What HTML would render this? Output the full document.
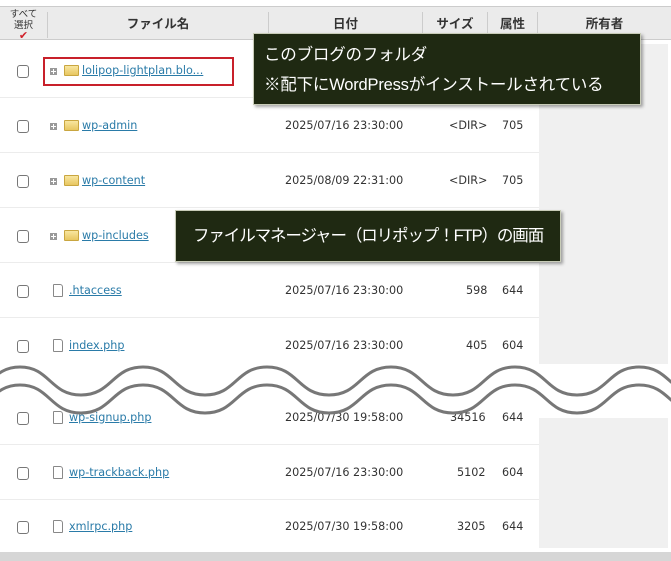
<!DOCTYPE html><html><head><meta charset="utf-8"><style>
*{margin:0;padding:0;box-sizing:border-box}
body{width:671px;height:561px;background:#fff;position:relative;overflow:hidden;font-family:"DejaVu Sans","Liberation Sans","Noto Sans CJK JP",sans-serif;font-size:11.2px;color:#333}
.a{position:absolute;white-space:nowrap}
.hd{left:0;top:6px;width:671px;height:34px;background:#ebebeb;border-top:1px solid #ccc;border-bottom:1px solid #ccc}
.hs{position:absolute;top:5px;width:1px;height:26px;background:#ccc}
.ht{position:absolute;top:0;line-height:34px;font-weight:bold;font-size:12.5px;color:#333;text-align:center;font-family:"Liberation Sans","Noto Sans CJK JP",sans-serif}
.own{left:539px;width:129px;background:#f0f0f0}
.line{left:0;width:539px;height:1px;background:#ececec}
.cb{width:12px;height:13px;border:1px solid #777;border-radius:3px;background:#fff}
.pl{width:7px;height:7px;background:#999;}
.pl:before{content:"";position:absolute;left:1px;top:3px;width:5px;height:1px;background:#fff}
.pl:after{content:"";position:absolute;left:3px;top:1px;width:1px;height:5px;background:#fff}
.fd{width:15px;height:11px;background:linear-gradient(#f8e6a0,#e8c660);border:1px solid #c9a640;border-radius:1px}
.fl{width:10px;height:13px;border:1px solid #888;border-radius:1px 3px 1px 1px;background:#fff}
.ln{color:#2a7ba8;text-decoration:underline}
.tip{background:#1f2912;color:#fff;border:1px solid #c8ccb8;box-shadow:2px 2px 3px rgba(0,0,0,.35);font-family:"Liberation Sans","Noto Sans CJK JP",sans-serif;font-size:16.5px;white-space:nowrap;overflow:hidden}
</style></head><body>
<div class="a hd">
<div class="hs" style="left:47px"></div><div class="hs" style="left:268px"></div><div class="hs" style="left:422px"></div><div class="hs" style="left:487px"></div><div class="hs" style="left:537px"></div>
<div class="ht" style="left:0;width:47px;font-size:9.5px;line-height:11px;top:2px;font-weight:normal">すべて<br>選択<br><span style="color:#d0202a;font-size:11px">✔</span></div>
<div class="ht" style="left:48px;width:220px">ファイル名</div>
<div class="ht" style="left:269px;width:153px">日付</div>
<div class="ht" style="left:423px;width:64px">サイズ</div>
<div class="ht" style="left:488px;width:49px">属性</div>
<div class="ht" style="left:538px;width:133px">所有者</div>
</div>
<div class="a own" style="top:44px;height:320px"></div>
<div class="a own" style="top:418px;height:130px"></div>
<div class="a line" style="top:97px"></div><div class="a line" style="top:152px"></div><div class="a line" style="top:207px"></div><div class="a line" style="top:262px"></div><div class="a line" style="top:317px"></div><div class="a line" style="top:444px"></div><div class="a line" style="top:499px"></div>

<div class="a cb" style="left:17px;top:65px"></div><div class="a pl" style="left:50px;top:68px"></div><div class="a fd" style="left:64px;top:65px"></div><div class="a ln" style="left:82px;top:64px">lolipop-lightplan.blo...</div>
<div class="a" style="left:43px;top:57px;width:191px;height:29px;border:2px solid #c8202a"></div>

<div class="a cb" style="left:17px;top:120px"></div><div class="a pl" style="left:50px;top:123px"></div><div class="a fd" style="left:64px;top:120px"></div><div class="a ln" style="left:82px;top:119px">wp-admin</div>
<div class="a" style="left:285px;top:119px">2025/07/16 23:30:00</div><div class="a" style="left:449px;top:119px">&lt;DIR&gt;</div><div class="a" style="left:502px;top:119px">705</div>

<div class="a cb" style="left:17px;top:175px"></div><div class="a pl" style="left:50px;top:178px"></div><div class="a fd" style="left:64px;top:175px"></div><div class="a ln" style="left:82px;top:174px">wp-content</div>
<div class="a" style="left:285px;top:174px">2025/08/09 22:31:00</div><div class="a" style="left:449px;top:174px">&lt;DIR&gt;</div><div class="a" style="left:502px;top:174px">705</div>

<div class="a cb" style="left:17px;top:230px"></div><div class="a pl" style="left:50px;top:233px"></div><div class="a fd" style="left:64px;top:230px"></div><div class="a ln" style="left:82px;top:229px">wp-includes</div>

<div class="a cb" style="left:17px;top:285px"></div><div class="a fl" style="left:53px;top:284px"></div><div class="a ln" style="left:69px;top:284px">.htaccess</div>
<div class="a" style="left:285px;top:284px">2025/07/16 23:30:00</div><div class="a" style="left:466px;top:284px">598</div><div class="a" style="left:502px;top:284px">644</div>

<div class="a cb" style="left:17px;top:340px"></div><div class="a fl" style="left:53px;top:339px"></div><div class="a ln" style="left:69px;top:339px">index.php</div>
<div class="a" style="left:285px;top:339px">2025/07/16 23:30:00</div><div class="a" style="left:466px;top:339px">405</div><div class="a" style="left:502px;top:339px">604</div>

<div class="a cb" style="left:17px;top:412px"></div><div class="a fl" style="left:53px;top:411px"></div><div class="a ln" style="left:69px;top:411px">wp-signup.php</div>
<div class="a" style="left:285px;top:411px">2025/07/30 19:58:00</div><div class="a" style="left:450px;top:411px">34516</div><div class="a" style="left:502px;top:411px">644</div>

<div class="a cb" style="left:17px;top:467px"></div><div class="a fl" style="left:53px;top:466px"></div><div class="a ln" style="left:69px;top:466px">wp-trackback.php</div>
<div class="a" style="left:285px;top:466px">2025/07/16 23:30:00</div><div class="a" style="left:457px;top:466px">5102</div><div class="a" style="left:502px;top:466px">604</div>

<div class="a cb" style="left:17px;top:521px"></div><div class="a fl" style="left:53px;top:520px"></div><div class="a ln" style="left:69px;top:520px">xmlrpc.php</div>
<div class="a" style="left:285px;top:520px">2025/07/30 19:58:00</div><div class="a" style="left:457px;top:520px">3205</div><div class="a" style="left:502px;top:520px">644</div>

<div class="a" style="left:0;top:552px;width:671px;height:9px;background:#d6d6d6"></div>

<svg class="a" style="left:0;top:355px" width="671" height="70" viewBox="0 355 671 70">
<path d="M-41,395 C-10,395 -10,367 20,367 C50,367 50,395 81,395 C112,395 112,367 143,367 C174,367 174,395 205,395 C236,395 236,367 267,367 C298,367 298,395 329,395 C360,395 360,367 391,367 C422,367 422,395 453,395 C484,395 484,367 515,367 C546,367 546,395 577,395 C608,395 608,367 639,367 C670,367 670,395 701,395 L701,413 C670,413 670,385 639,385 C608,385 608,413 577,413 C546,413 546,385 515,385 C484,385 484,413 453,413 C422,413 422,385 391,385 C360,385 360,413 329,413 C298,413 298,385 267,385 C236,385 236,413 205,413 C174,413 174,385 143,385 C112,385 112,413 81,413 C50,413 50,385 20,385 C-10,385 -10,413 -41,413 Z" fill="#fff"/>
<g fill="none" stroke="#777" stroke-width="3">
<path d="M-41,395 C-10,395 -10,367 20,367 C50,367 50,395 81,395 C112,395 112,367 143,367 C174,367 174,395 205,395 C236,395 236,367 267,367 C298,367 298,395 329,395 C360,395 360,367 391,367 C422,367 422,395 453,395 C484,395 484,367 515,367 C546,367 546,395 577,395 C608,395 608,367 639,367 C670,367 670,395 701,395"/>
<path d="M-41,413 C-10,413 -10,385 20,385 C50,385 50,413 81,413 C112,413 112,385 143,385 C174,385 174,413 205,413 C236,413 236,385 267,385 C298,385 298,413 329,413 C360,413 360,385 391,385 C422,385 422,413 453,413 C484,413 484,385 515,385 C546,385 546,413 577,413 C608,413 608,385 639,385 C670,385 670,413 701,413"/>
</g></svg>

<div class="a tip" style="left:253px;top:33px;width:388px;height:72px;padding:6px 10px;line-height:30px;letter-spacing:-0.2px">このブログのフォルダ<br>※配下にWordPressがインストールされている</div>
<div class="a tip" style="left:175px;top:210px;width:386px;height:52px;line-height:50px;padding-left:17px;letter-spacing:-1.1px">ファイルマネージャー（ロリポップ！FTP）の画面</div>
</body></html>
